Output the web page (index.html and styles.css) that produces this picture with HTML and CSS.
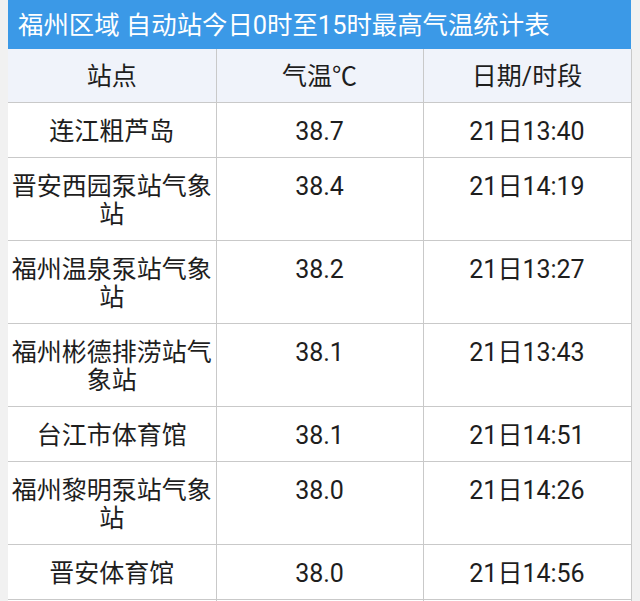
FILE: index.html
```html
<!DOCTYPE html>
<html lang="zh-CN">
<head>
<meta charset="utf-8">
<title>福州区域 自动站今日0时至15时最高气温统计表</title>
<link rel="stylesheet" href="styles.css">
</head>
<body>
<div class="page">
  <div class="title">福州区域 自动站今日0时至15时最高气温统计表</div>
  <table class="stats">
    <colgroup>
      <col class="c1"><col class="c2"><col class="c3">
    </colgroup>
    <thead>
      <tr><th>站点</th><th>气温℃</th><th>日期/时段</th></tr>
    </thead>
    <tbody>
      <tr><td>连江粗芦岛</td><td>38.7</td><td>21日13:40</td></tr>
      <tr><td>晋安西园泵站气象站</td><td>38.4</td><td>21日14:19</td></tr>
      <tr><td>福州温泉泵站气象站</td><td>38.2</td><td>21日13:27</td></tr>
      <tr><td>福州彬德排涝站气象站</td><td>38.1</td><td>21日13:43</td></tr>
      <tr><td>台江市体育馆</td><td>38.1</td><td>21日14:51</td></tr>
      <tr><td>福州黎明泵站气象站</td><td>38.0</td><td>21日14:26</td></tr>
      <tr><td>晋安体育馆</td><td>38.0</td><td>21日14:56</td></tr>
      <tr><td>&nbsp;</td><td>&nbsp;</td><td>&nbsp;</td></tr>
    </tbody>
  </table>
</div>
</body>
</html>
```
FILE: styles.css
```css
html, body {
  margin: 0;
  padding: 0;
  background: #f1f1f1;
}
body {
  font-family: Roboto, "Noto Sans CJK SC", "Noto Sans", sans-serif;
  color: #1e1e1e;
}
.page {
  width: 623px;
  margin-left: 8px;
  background: #ffffff;
}
.title {
  height: 49px;
  box-sizing: border-box;
  background: #3b99e7;
  color: #ffffff;
  font-size: 25.4px;
  line-height: 47px;
  padding: 2px 0 0 10px;
  white-space: nowrap;
}
.stats {
  width: 623px;
  border-collapse: collapse;
  table-layout: fixed;
}
.c1 { width: 208px; }
.c2 { width: 207px; }
.c3 { width: 208px; }
.stats th, .stats td {
  border: 1px solid #c9c9c9;
  text-align: center;
  font-size: 25px;
  font-weight: normal;
  line-height: 28px;
  padding: 15px 3px 11px;
  vertical-align: top;
}
.stats tr > :first-child { border-left: none; }
.stats thead th {
  background: #f0f3fa;
  border-top: none;
  padding-top: 14px;
  padding-bottom: 11px;
}
.stats tbody td {
  background: #ffffff;
}
```
